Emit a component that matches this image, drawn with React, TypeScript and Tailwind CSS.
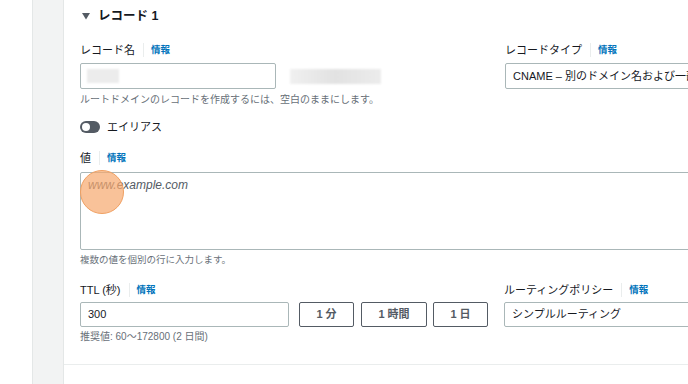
import React from "react";

const font = { fontFamily: '"Liberation Sans", "Noto Sans CJK JP", sans-serif' };

function Label({ text }: { text: string }) {
  return (
    <div className="flex items-center h-[16px] text-[11px] text-[#16191f] leading-[16px]">
      <span>{text}</span>
      <span className="ml-[8px] pl-[7px] border-l border-[#eaeded] h-[14px] flex items-center text-[9.5px] font-bold text-[#0073bb]">
        情報
      </span>
    </div>
  );
}

function Btn({ text, w }: { text: string; w: string }) {
  return (
    <div
      className={`${w} h-[25px] border border-[#545b64] rounded-[2px] flex items-center justify-center text-[11px] font-bold text-[#545b64]`}
    >
      {text}
    </div>
  );
}

export default function App() {
  return (
    <div
      className="relative w-[688px] h-[384px] overflow-hidden bg-white flex text-[#16191f]"
      style={font}
    >
      <div className="w-[32px] shrink-0 bg-white" />
      <div className="w-[32px] shrink-0 bg-[#f2f3f3] border-l border-r border-[#e4e7e7]" />
      <div className="flex-1 flex flex-col min-w-0">
        <div className="pl-[16px] flex flex-col w-[900px]">
          {/* header */}
          <div className="h-[32px] flex items-center pl-[2px]">
            <svg width="8" height="7" viewBox="0 0 8 7" className="mr-[8px]">
              <polygon points="0,0 8,0 4,6.5" fill="#545b64" />
            </svg>
            <span className="text-[12.5px] font-bold">レコード 1</span>
          </div>

          {/* record name / type */}
          <div className="flex mt-[10px]">
            <div className="w-[409px] flex flex-col">
              <Label text="レコード名" />
              <div className="flex items-center mt-[5px]">
                <div className="w-[196px] h-[26px] border border-[#aab7b8] rounded-[2px] flex items-center pl-[6px]">
                  <div className="w-[32px] h-[14px] bg-[#ececec] blur-[1px]" />
                </div>
                <div className="ml-[14px] w-[91px] h-[15px] bg-gradient-to-r from-[#f0f0f0] via-[#e2e2e2] to-[#ececec] blur-[1px]" />
              </div>
              <div className="mt-[4px] text-[10px] leading-[14px] text-[#687078]">
                ルートドメインのレコードを作成するには、空白のままにします。
              </div>
            </div>
            <div className="ml-[16px] w-[300px] flex flex-col">
              <Label text="レコードタイプ" />
              <div className="mt-[5px] h-[26px] border border-[#aab7b8] rounded-[2px] flex items-center pl-[7px] text-[11px] whitespace-nowrap overflow-hidden">
                CNAME – 別のドメイン名および一部の AWS リソースにトラフィックをルーティングします
              </div>
            </div>
          </div>

          {/* alias toggle */}
          <div className="flex items-center mt-[12px] h-[16px]">
            <div className="w-[20px] h-[12px] rounded-full bg-[#545b64] relative">
              <div className="absolute left-[2px] top-[2px] w-[8px] h-[8px] rounded-full bg-white" />
            </div>
            <span className="ml-[7px] text-[11px]">エイリアス</span>
          </div>

          {/* value */}
          <div className="mt-[15px]">
            <Label text="値" />
          </div>
          <div className="mt-[6px] h-[78px] border border-[#aab7b8] rounded-[2px] pl-[7px] pt-[3px] leading-[16px]">
            <span className="italic text-[12px] text-[#545b64]">www.example.com</span>
          </div>
          <div className="mt-[3px] text-[9.5px] leading-[14px] text-[#687078]">
            複数の値を個別の行に入力します。
          </div>

          {/* TTL / routing */}
          <div className="flex mt-[15px]">
            <div className="w-[408px] flex flex-col">
              <Label text="TTL (秒)" />
              <div className="flex mt-[4px]">
                <div className="w-[209px] h-[25px] border border-[#aab7b8] rounded-[2px] flex items-center pl-[7px] text-[11px]">
                  300
                </div>
                <div className="ml-[10px]">
                  <Btn text="1 分" w="w-[55px]" />
                </div>
                <div className="ml-[7px]">
                  <Btn text="1 時間" w="w-[66px]" />
                </div>
                <div className="ml-[6px]">
                  <Btn text="1 日" w="w-[55px]" />
                </div>
              </div>
              <div className="mt-[3px] text-[10px] leading-[14px] text-[#687078]">
                推奨値: 60～172800 (2 日間)
              </div>
            </div>
            <div className="ml-[16px] w-[300px] flex flex-col">
              <Label text="ルーティングポリシー" />
              <div className="mt-[4px] h-[25px] border border-[#aab7b8] rounded-[2px] flex items-center pl-[7px] text-[11px]">
                シンプルルーティング
              </div>
            </div>
          </div>
        </div>
        <div className="mt-[20px] border-t border-[#eaeded]" />
      </div>

      {/* click indicator */}
      <div className="absolute left-[80px] top-[170px] w-[44px] h-[44px] rounded-full bg-[#f7a86e]/70 border-[1.5px] border-[#f0a062]" />
    </div>
  );
}
